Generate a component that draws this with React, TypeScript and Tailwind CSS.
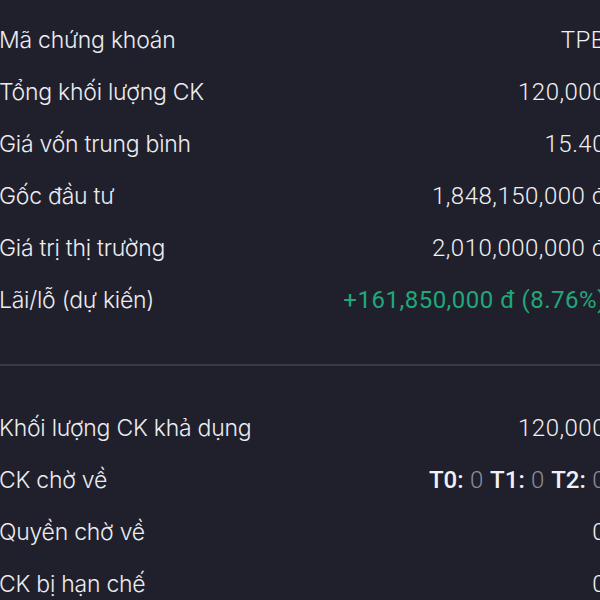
const rowsTop = [
    { label: "Mã chứng khoán", value: "TPB" },
    { label: "Tổng khối lượng CK", value: "120,000" },
    { label: "Giá vốn trung bình", value: "15.40" },
    { label: "Gốc đầu tư", value: "1,848,150,000 đ" },
    { label: "Giá trị thị trường", value: "2,010,000,000 đ" },
];

const Row = ({ label, children }: { label: string; children: React.ReactNode }) => {
    return (
        <div className="flex items-center justify-between h-[52px]">
            <span className="text-[23px] text-[#ececf1] font-['Inter',sans-serif] font-light tracking-[-0.25px]">{label}</span>
            <span className="text-[24px] text-[#f1f1f4] font-['Roboto',sans-serif] font-light tracking-[0.5px]">{children}</span>
        </div>
    );
};

const App = () => {
    return (
        <div className="w-[600px] h-[600px] overflow-hidden bg-[#20202c]">
            <div className="w-[607px] -ml-[1px]">
                <div className="pt-[14px] pb-[38px]">
                    {rowsTop.map((r) => (
                        <Row key={r.label} label={r.label}>{r.value}</Row>
                    ))}
                    <Row label="Lãi/lỗ (dự kiến)">
                        <span className="text-[#1fa97a] font-normal">+161,850,000 đ (8.76%)</span>
                    </Row>
                </div>

                <div className="h-[2px] bg-[#393944]" />

                <div className="pt-[36px]">
                    <Row label="Khối lượng CK khả dụng">120,000</Row>
                    <Row label="CK chờ về">
                        <span className="font-medium tracking-normal">T0:</span> <span className="text-[#8c8c98]">0</span>{" "}
                        <span className="font-medium tracking-normal">T1:</span> <span className="text-[#8c8c98]">0</span>{" "}
                        <span className="font-medium tracking-normal">T2:</span> <span className="text-[#8c8c98]">0</span>
                    </Row>
                    <Row label="Quyền chờ về">0</Row>
                    <Row label="CK bị hạn chế">0</Row>
                </div>
            </div>
        </div>
    );
};

export default App;
